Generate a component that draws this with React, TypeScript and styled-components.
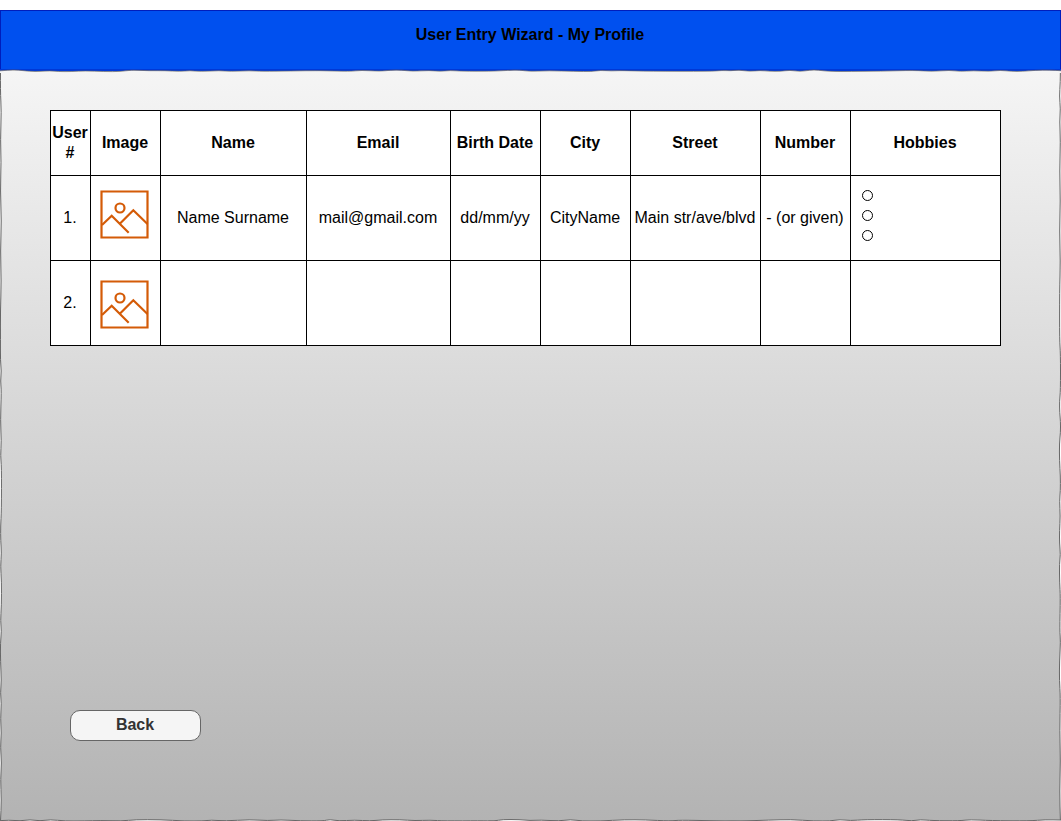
import React from "react";
import styled, { createGlobalStyle } from "styled-components";

const GlobalStyle = createGlobalStyle`
  *, *::before, *::after { box-sizing: border-box; }
  body {
    margin: 0;
    background: #ffffff;
    color: #000000;
    font-family: "Liberation Sans", Arial, Helvetica, sans-serif;
    font-size: 16px;
    line-height: 20px;
  }
`;

const Page = styled.div`
  display: flex;
  flex-direction: column;
  min-height: 100vh;
  padding-top: 10px;
  overflow: hidden;
`;

const Header = styled.header`
  height: 61px;
  padding: 14px 1px 0 0;
  border: 1px solid #001dbc;
  background: #0050ef;
  text-align: center;
`;

const Title = styled.h1`
  margin: 0;
  font-size: 16px;
  font-weight: 700;
  line-height: 20px;
`;

const Paper = styled.main`
  position: relative;
  flex: 1;
  display: flex;
  flex-direction: column;
  justify-content: space-between;
  align-items: flex-start;
  padding: 39px 60px 80px 50px;
  background: linear-gradient(#f5f5f5, #b3b3b3);
`;

const HorizontalEdge = styled.svg<{ $side: "top" | "bottom" }>`
  position: absolute;
  left: 0;
  ${({ $side }) => ($side === "top" ? "top: -2px;" : "bottom: -1px;")}
  width: 100%;
  height: 4px;
`;

const VerticalEdge = styled.svg<{ $side: "left" | "right" }>`
  position: absolute;
  top: 0;
  ${({ $side }) => $side}: 0;
  width: 3px;
  height: 100%;
`;

const UserTable = styled.table`
  width: 100%;
  table-layout: fixed;
  border-collapse: collapse;
  background: #ffffff;
`;

const Column = styled.col<{ $width: number }>`
  width: ${({ $width }) => $width}px;
`;

const HeadRow = styled.tr`
  height: 65px;
`;

const Row = styled.tr`
  height: 85px;
`;

const HeadCell = styled.th`
  padding: 0 1px 0 0;
  border: 1px solid #000000;
  font-weight: 700;
`;

const Cell = styled.td`
  padding: 0 1px 0 0;
  border: 1px solid #000000;
  text-align: center;
  white-space: nowrap;
`;

const ImageCell = styled(Cell)<{ $inset: number }>`
  padding: ${({ $inset }) => $inset}px 0 0 9px;
  text-align: left;
  vertical-align: top;
`;

const Picture = styled.svg`
  display: block;
  width: 49px;
  height: 49px;
`;

const HobbyList = styled.div`
  display: flex;
  flex-direction: column;
  align-items: flex-start;
  gap: 9px;
  padding: 0 0 6px 11px;
`;

const HobbyRadio = styled.input`
  appearance: none;
  width: 11px;
  height: 11px;
  margin: 0;
  border: 1px solid #000000;
  border-radius: 50%;
  background: #ffffff;

  &:checked { box-shadow: inset 0 0 0 2px #ffffff; background: #000000; }
`;

const BackButton = styled.button`
  width: 131px;
  height: 31px;
  margin-left: 20px;
  padding: 0 1px 2px 0;
  border: 1px solid #666666;
  border-radius: 10px;
  background: #f5f5f5;
  color: #333333;
  font: inherit;
  font-weight: 700;
`;

type Knot = [number, number];

// Position along the edge, then the depth of the tear.
const topKnots: Knot[] = [
  [0, 1.8], [8, 1.2], [18, 1], [30, 2.4], [40, 2.5], [50, 1.7], [58, 2.6], [72, 2.6], [85, 1.8],
  [104, 2.6], [121, 2.6], [130, 1], [150, 1.8], [165, 1.6], [180, 2.5], [190, 1.5], [200, 2.6],
  [220, 1.5], [230, 2.5], [250, 1.6], [262, 2.4], [290, 2], [320, 1.5], [350, 2.5], [361, 1.2],
  [380, 2.3], [390, 1.2], [402, 1.1], [412, 2.3], [430, 1.4], [440, 2.4], [450, 1.4], [462, 2.2],
  [490, 2.3], [508, 1.4], [520, 1], [530, 2.5], [548, 1.6], [575, 2.4], [592, 2.6], [600, 1.3],
  [612, 2], [620, 1.5], [650, 2.3], [710, 2.4], [722, 1.4], [730, 1.8], [740, 1.1], [750, 2.4],
  [760, 1.4], [770, 2.3], [780, 2.4], [790, 1.1], [800, 2.6], [810, 1.1], [818, 1.1], [830, 2.5],
  [850, 2.5], [880, 2.2], [915, 1.3], [932, 2.5], [950, 1.2], [960, 2.5], [973, 1.6], [990, 2.4],
  [1000, 1.2], [1012, 2.4], [1022, 2.4], [1035, 1.3], [1050, 1.1], [1061, 1.7],
];

const bottomKnots: Knot[] = [
  [0, 2.6], [10, 2], [20, 3], [30, 1.6], [40, 3], [50, 1.6], [65, 3], [85, 3], [100, 2.4],
  [122, 3], [135, 1.7], [160, 1.7], [185, 3], [203, 3], [211, 2], [225, 3], [250, 1.6],
  [268, 2.7], [280, 1.8], [300, 2.8], [323, 3], [330, 1.4], [338, 3], [355, 2], [370, 3],
  [382, 1.8], [400, 1.7], [415, 2.7], [430, 2.1], [445, 3], [480, 2.7], [495, 3], [502, 1.5],
  [520, 1.6], [530, 2.6], [540, 2], [560, 3], [570, 1.5], [582, 3], [600, 3], [625, 1.7],
  [645, 1.9], [670, 3], [680, 2.1], [710, 2.7], [740, 3], [770, 2.1], [790, 1.5], [815, 3],
  [830, 3], [840, 1.5], [850, 2.7], [865, 1.6], [900, 1.7], [912, 3], [920, 1.6], [932, 2.6],
  [960, 2.8], [970, 1.6], [990, 2.6], [1030, 2.9], [1045, 1.7], [1061, 2],
];

const leftKnots: Knot[] = [
  [0, 0.5], [20, 0.3], [40, 1.4], [70, 0.4], [90, 1.2], [120, 0.3], [150, 1.5], [180, 0.4],
  [210, 1.3], [240, 0.4], [270, 0.5], [290, 0.4], [300, 1.4], [310, 0.5], [320, 1.4], [350, 0.4],
  [370, 1.4], [385, 0.5], [395, 1.5], [440, 1.4], [455, 0.6], [470, 0.7], [482, 1.5], [495, 0.5],
  [510, 1.5], [535, 1.4], [550, 0.5], [560, 1.5], [572, 0.4], [590, 0.5], [610, 1.4], [622, 0.4],
  [632, 1.4], [648, 0.5], [662, 1.4], [676, 0.4], [692, 1.6], [708, 0.5], [729, 1.4], [750, 0.5],
];

const rightKnots: Knot[] = [
  [0, 2.4], [12, 2.3], [25, 1.4], [38, 2.5], [50, 1.6], [70, 2.5], [100, 1.6], [130, 2.4],
  [160, 1.5], [190, 2.4], [220, 1.6], [270, 1.6], [282, 2.5], [320, 2.5], [330, 1.5], [342, 1.7],
  [350, 2.5], [362, 2.5], [372, 1.4], [390, 1.5], [405, 2.4], [420, 2.4], [430, 1.5], [445, 2.3],
  [460, 1.5], [472, 1.5], [484, 2.5], [492, 1.4], [512, 1.6], [525, 2.4], [560, 1.7], [570, 2.6],
  [590, 1.5], [610, 1.4], [625, 2.4], [660, 1.7], [690, 2.5], [720, 1.6], [750, 2.4],
];

/* Smooths the knots with quadratic curves through their midpoints. */
const tear = (knots: Knot[], vertical = false) => {
  const at = (along: number, depth: number) => (vertical ? `${depth} ${along}` : `${along} ${depth}`);
  const curves = knots.slice(1, -1).map(([a, d], i) => {
    const [nextA, nextD] = knots[i + 2];
    return `Q${at(a, d)} ${at((a + nextA) / 2, (d + nextD) / 2)}`;
  });
  const last = knots[knots.length - 1];
  return `M${at(...knots[0])}${curves.join("")}L${at(...last)}`;
};

const strokeProps = {
  fill: "none",
  stroke: "#666666",
  vectorEffect: "non-scaling-stroke" as const,
};

const TornEdges = () => (
  <>
    <VerticalEdge $side="left" viewBox="0 0 3 750" preserveAspectRatio="none" aria-hidden="true">
      <path d={`${tear(leftKnots, true)}H0V0Z`} fill="#ffffff" />
      <path d={tear(leftKnots, true)} {...strokeProps} />
    </VerticalEdge>
    <VerticalEdge $side="right" viewBox="0 0 3 750" preserveAspectRatio="none" aria-hidden="true">
      <path d={`${tear(rightKnots, true)}H3V0Z`} fill="#ffffff" />
      <path d={tear(rightKnots, true)} {...strokeProps} />
    </VerticalEdge>
    <HorizontalEdge $side="top" viewBox="0 0 1061 4" preserveAspectRatio="none" aria-hidden="true">
      <path d={`${tear(topKnots)}V0H0Z`} fill="#0038d6" />
      <path d={`${tear(topKnots)}V4H0Z`} fill="#f5f5f5" />
      <path d={tear(topKnots)} {...strokeProps} strokeWidth="0.7" />
    </HorizontalEdge>
    <HorizontalEdge $side="bottom" viewBox="0 0 1061 4" preserveAspectRatio="none" aria-hidden="true">
      <path d={`${tear(bottomKnots)}V4H0Z`} fill="#ffffff" />
      <path d={tear(bottomKnots)} {...strokeProps} />
    </HorizontalEdge>
  </>
);

const PictureIcon = () => (
  <Picture viewBox="0 0 49 49" fill="none" stroke="#d45b07" strokeWidth="2.2" role="img" aria-label="User image">
    <path d="M1.5 1.5H47.5V47.5H1.5Z" />
    <circle cx="20" cy="18" r="4.5" />
    <path d="M2 35L11.7 25.7L28.7 42.8M19.8 33.8L33.3 20.2L47.5 34" />
  </Picture>
);

const columns = [
  { label: "User #", width: 40 },
  { label: "Image", width: 70 },
  { label: "Name", width: 146 },
  { label: "Email", width: 144 },
  { label: "Birth Date", width: 90 },
  { label: "City", width: 90 },
  { label: "Street", width: 130 },
  { label: "Number", width: 90 },
  { label: "Hobbies", width: 150 },
];

const users = [
  {
    id: "1.",
    inset: 14,
    details: ["Name Surname", "mail@gmail.com", "dd/mm/yy", "CityName", "Main str/ave/blvd", "- (or given)"],
    hobbies: ["First hobby", "Second hobby", "Third hobby"],
  },
  { id: "2.", inset: 19, details: ["", "", "", "", "", ""], hobbies: [] },
];

export default function App() {
  return (
    <>
      <GlobalStyle />
      <Page>
        <Header>
          <Title>User Entry Wizard - My Profile</Title>
        </Header>
        <Paper>
          <TornEdges />
          <UserTable>
            <colgroup>
              {columns.map(({ label, width }) => (
                <Column key={label} $width={width} />
              ))}
            </colgroup>
            <thead>
              <HeadRow>
                {columns.map(({ label }) => (
                  <HeadCell key={label} scope="col">{label}</HeadCell>
                ))}
              </HeadRow>
            </thead>
            <tbody>
              {users.map(({ id, inset, details, hobbies }) => (
                <Row key={id}>
                  <Cell>{id}</Cell>
                  <ImageCell $inset={inset}>
                    <PictureIcon />
                  </ImageCell>
                  {details.map((text, i) => (
                    <Cell key={i}>{text}</Cell>
                  ))}
                  <Cell>
                    {hobbies.length > 0 && (
                      <HobbyList>
                        {hobbies.map((hobby) => (
                          <HobbyRadio key={hobby} type="radio" name={`hobby-${id}`} aria-label={hobby} />
                        ))}
                      </HobbyList>
                    )}
                  </Cell>
                </Row>
              ))}
            </tbody>
          </UserTable>
          <BackButton type="button">Back</BackButton>
        </Paper>
      </Page>
    </>
  );
}
